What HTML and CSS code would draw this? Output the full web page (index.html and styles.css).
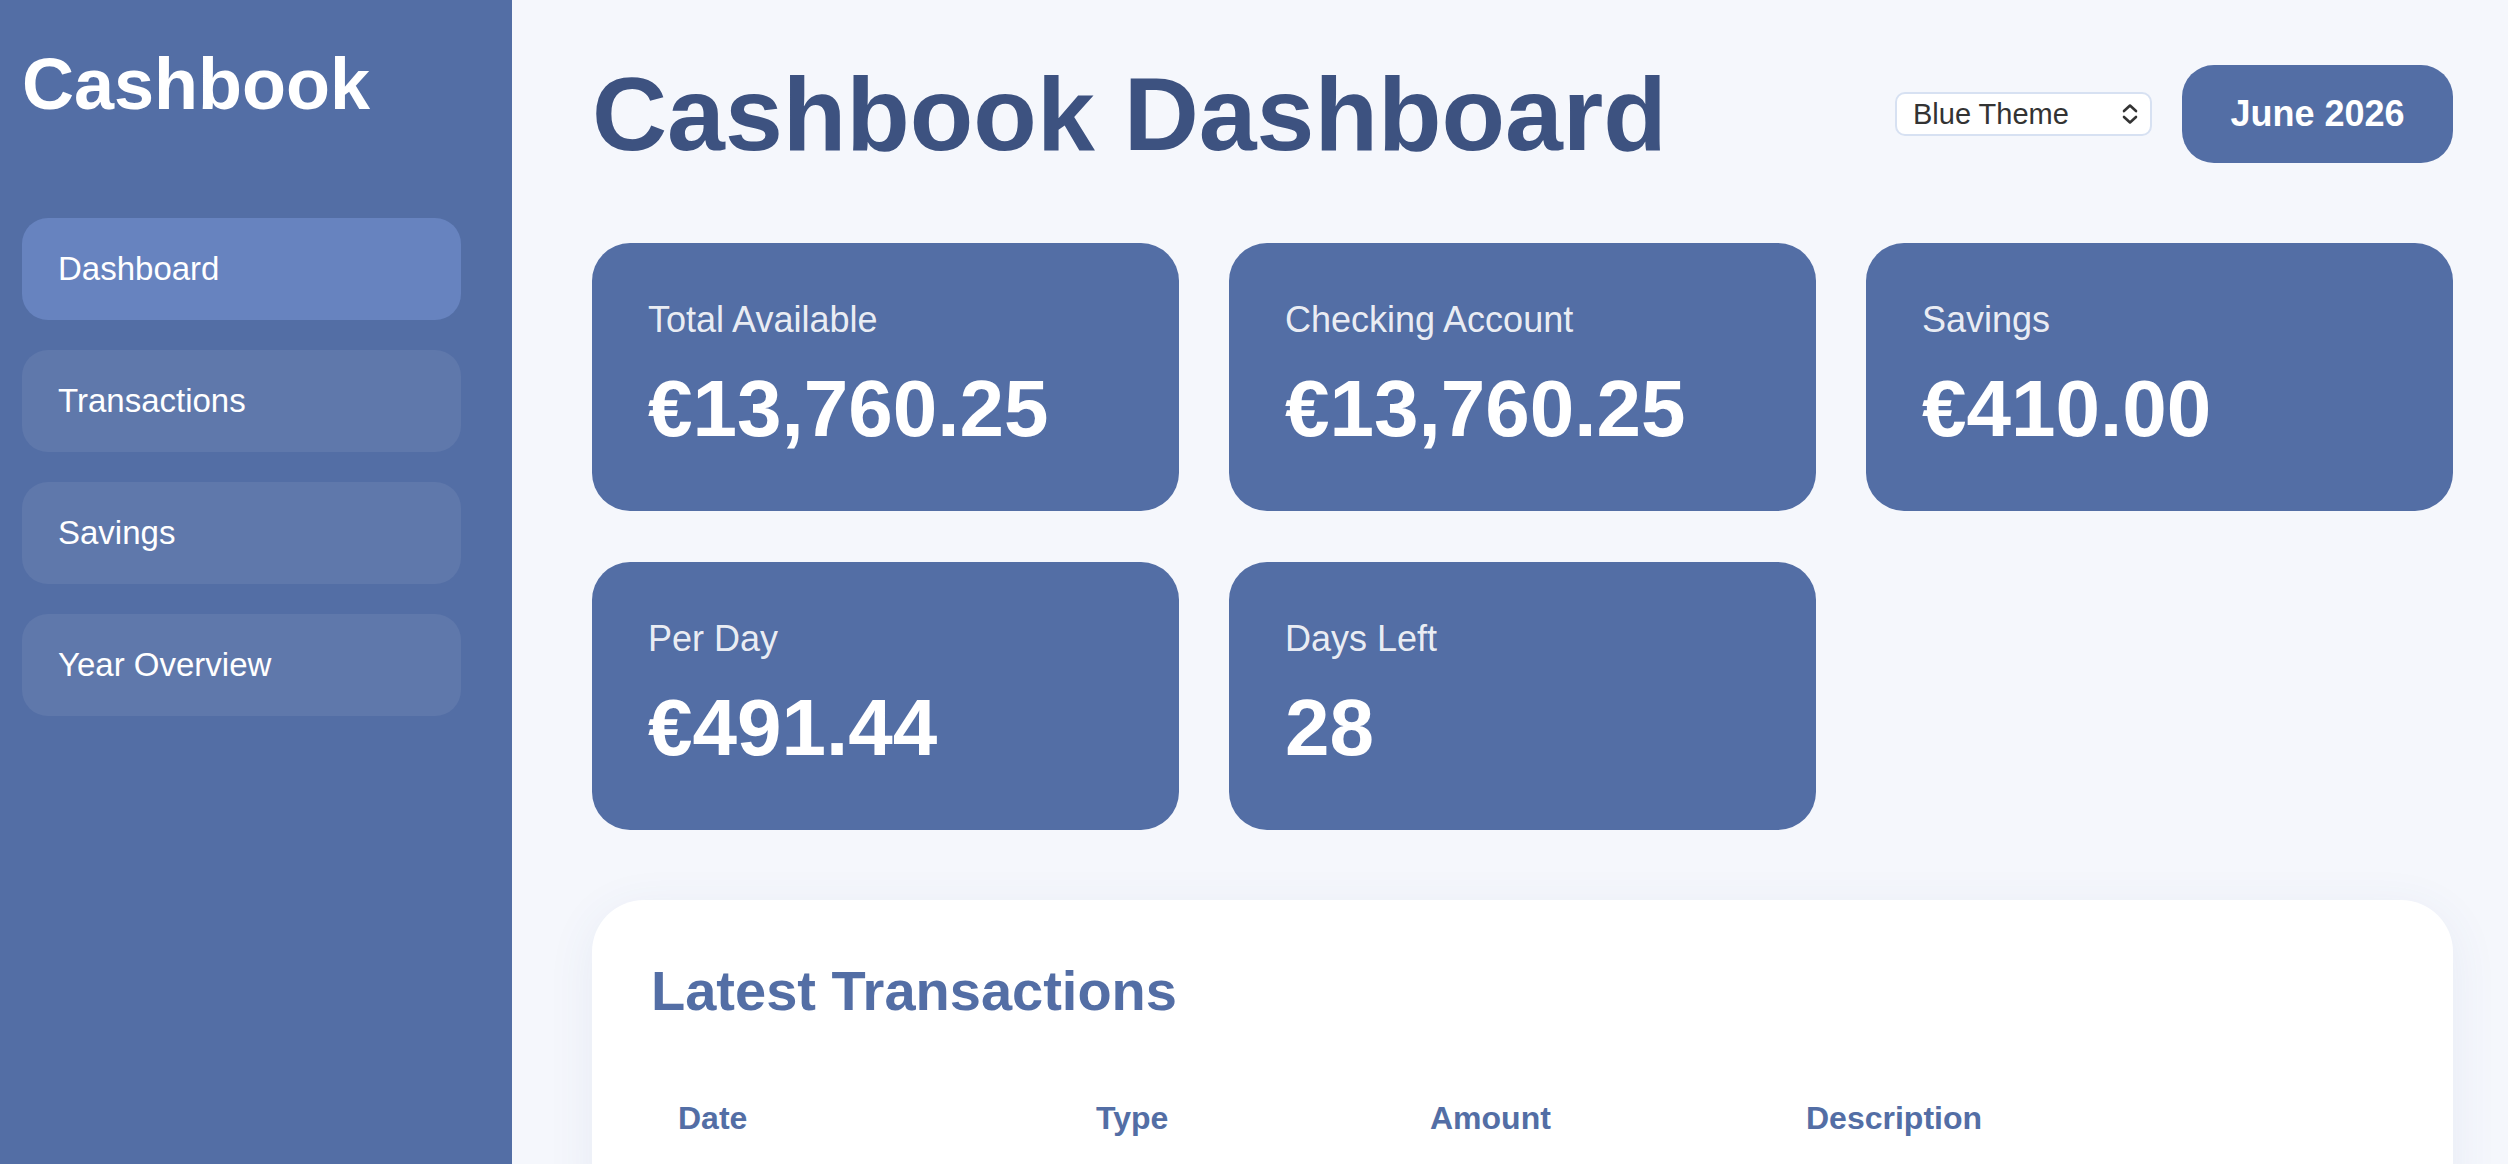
FILE: index.html
```html
<!DOCTYPE html>
<html lang="en">
<head>
<meta charset="utf-8">
<title>Cashbook Dashboard</title>
<link rel="stylesheet" href="styles.css">
</head>
<body>
  <aside class="sidebar">
    <h1 class="brand">Cashbook</h1>
    <nav class="nav">
      <a class="nav-item active" href="#">Dashboard</a>
      <a class="nav-item" href="#">Transactions</a>
      <a class="nav-item" href="#">Savings</a>
      <a class="nav-item" href="#">Year Overview</a>
    </nav>
  </aside>
  <main class="main">
    <header class="header">
      <h2 class="page-title">Cashbook Dashboard</h2>
      <div class="header-actions">
        <div class="select-wrap">
          <select class="theme-select">
            <option>Blue Theme</option>
            <option>Green Theme</option>
            <option>Dark Theme</option>
          </select>
          <svg class="select-icon" width="18" height="22" viewBox="0 0 18 22" aria-hidden="true">
            <path d="M3 8 L9 2.5 L15 8" fill="none" stroke="#333" stroke-width="2.6" stroke-linecap="round" stroke-linejoin="round"/>
            <path d="M3 14 L9 19.5 L15 14" fill="none" stroke="#333" stroke-width="2.6" stroke-linecap="round" stroke-linejoin="round"/>
          </svg>
        </div>
        <button class="month-btn">June 2026</button>
      </div>
    </header>

    <section class="stats">
      <div class="stat-card">
        <div class="stat-label">Total Available</div>
        <div class="stat-value">€13,760.25</div>
      </div>
      <div class="stat-card">
        <div class="stat-label">Checking Account</div>
        <div class="stat-value">€13,760.25</div>
      </div>
      <div class="stat-card">
        <div class="stat-label">Savings</div>
        <div class="stat-value">€410.00</div>
      </div>
      <div class="stat-card">
        <div class="stat-label">Per Day</div>
        <div class="stat-value">€491.44</div>
      </div>
      <div class="stat-card">
        <div class="stat-label">Days Left</div>
        <div class="stat-value">28</div>
      </div>
    </section>

    <section class="panel">
      <h3 class="panel-title">Latest Transactions</h3>
      <table class="tx-table">
        <colgroup>
          <col class="col-date">
          <col class="col-type">
          <col class="col-amount">
          <col class="col-desc">
        </colgroup>
        <thead>
          <tr>
            <th>Date</th>
            <th>Type</th>
            <th>Amount</th>
            <th>Description</th>
          </tr>
        </thead>
        <tbody></tbody>
      </table>
    </section>
  </main>
</body>
</html>
```

FILE: styles.css
```css
* {
  box-sizing: border-box;
}

html, body {
  margin: 0;
  padding: 0;
}

body {
  display: flex;
  min-height: 100vh;
  background: #f5f7fc;
  font-family: "Liberation Sans", Arial, Helvetica, sans-serif;
  color: #333;
}

/* Sidebar */
.sidebar {
  width: 512px;
  flex-shrink: 0;
  min-height: 100vh;
  background: #536ea5;
  padding: 43px 51px 0 22px;
}

.brand {
  margin: 0 0 92px 0;
  font-size: 72px;
  font-weight: bold;
  line-height: 83px;
  color: #ffffff;
}

.nav {
  display: flex;
  flex-direction: column;
  gap: 30px;
}

.nav-item {
  display: flex;
  align-items: center;
  height: 102px;
  padding: 0 36px;
  border-radius: 26px;
  background: rgba(255, 255, 255, 0.07);
  color: #ffffff;
  font-size: 33px;
  text-decoration: none;
}

.nav-item.active {
  background: #6783bf;
}

/* Main */
.main {
  flex: 1;
  min-width: 0;
  padding: 54px 55px 40px 80px;
}

.header {
  display: flex;
  align-items: center;
  justify-content: space-between;
  margin-bottom: 69px;
}

.page-title {
  margin: 0;
  font-size: 104px;
  font-weight: bold;
  line-height: 120px;
  color: #3d5280;
}

.header-actions {
  display: flex;
  align-items: center;
  gap: 30px;
}

.select-wrap {
  position: relative;
  display: flex;
}

.theme-select {
  appearance: none;
  -webkit-appearance: none;
  width: 257px;
  height: 44px;
  padding: 0 40px 0 16px;
  border: 2px solid #d7e1f2;
  border-radius: 10px;
  background: #ffffff;
  font-family: "Liberation Sans", Arial, Helvetica, sans-serif;
  font-size: 29px;
  color: #333333;
}

.select-icon {
  position: absolute;
  right: 13px;
  top: 11px;
  pointer-events: none;
}

.month-btn {
  width: 271px;
  height: 98px;
  border: none;
  border-radius: 32px;
  background: #536ea5;
  color: #ffffff;
  font-family: "Liberation Sans", Arial, Helvetica, sans-serif;
  font-size: 36px;
  font-weight: bold;
}

/* Stats */
.stats {
  display: grid;
  grid-template-columns: repeat(3, 1fr);
  gap: 51px 50px;
  margin-bottom: 70px;
}

.stat-card {
  display: flex;
  flex-direction: column;
  gap: 23px;
  padding: 56px 56px;
  border-radius: 38px;
  background: #536ea5;
  color: #ffffff;
}

.stat-label {
  font-size: 36px;
  line-height: 41px;
  color: rgba(255, 255, 255, 0.9);
}

.stat-value {
  font-size: 80px;
  font-weight: bold;
  line-height: 92px;
}

/* Transactions panel */
.panel {
  background: #ffffff;
  border-radius: 52px;
  padding: 59px;
  box-shadow: 0 10px 48px rgba(70, 90, 150, 0.08);
}

.panel-title {
  margin: 0 0 51px 0;
  font-size: 56px;
  font-weight: bold;
  line-height: 64px;
  color: #536ea5;
}

.tx-table {
  width: 100%;
  table-layout: fixed;
  border-collapse: collapse;
}

.col-date { width: 418px; }
.col-type { width: 334px; }
.col-amount { width: 376px; }
.col-desc { width: auto; }

.tx-table th {
  text-align: left;
  padding: 26px 27px;
  font-size: 32px;
  line-height: 37px;
  font-weight: bold;
  color: #536ea5;
}
```
